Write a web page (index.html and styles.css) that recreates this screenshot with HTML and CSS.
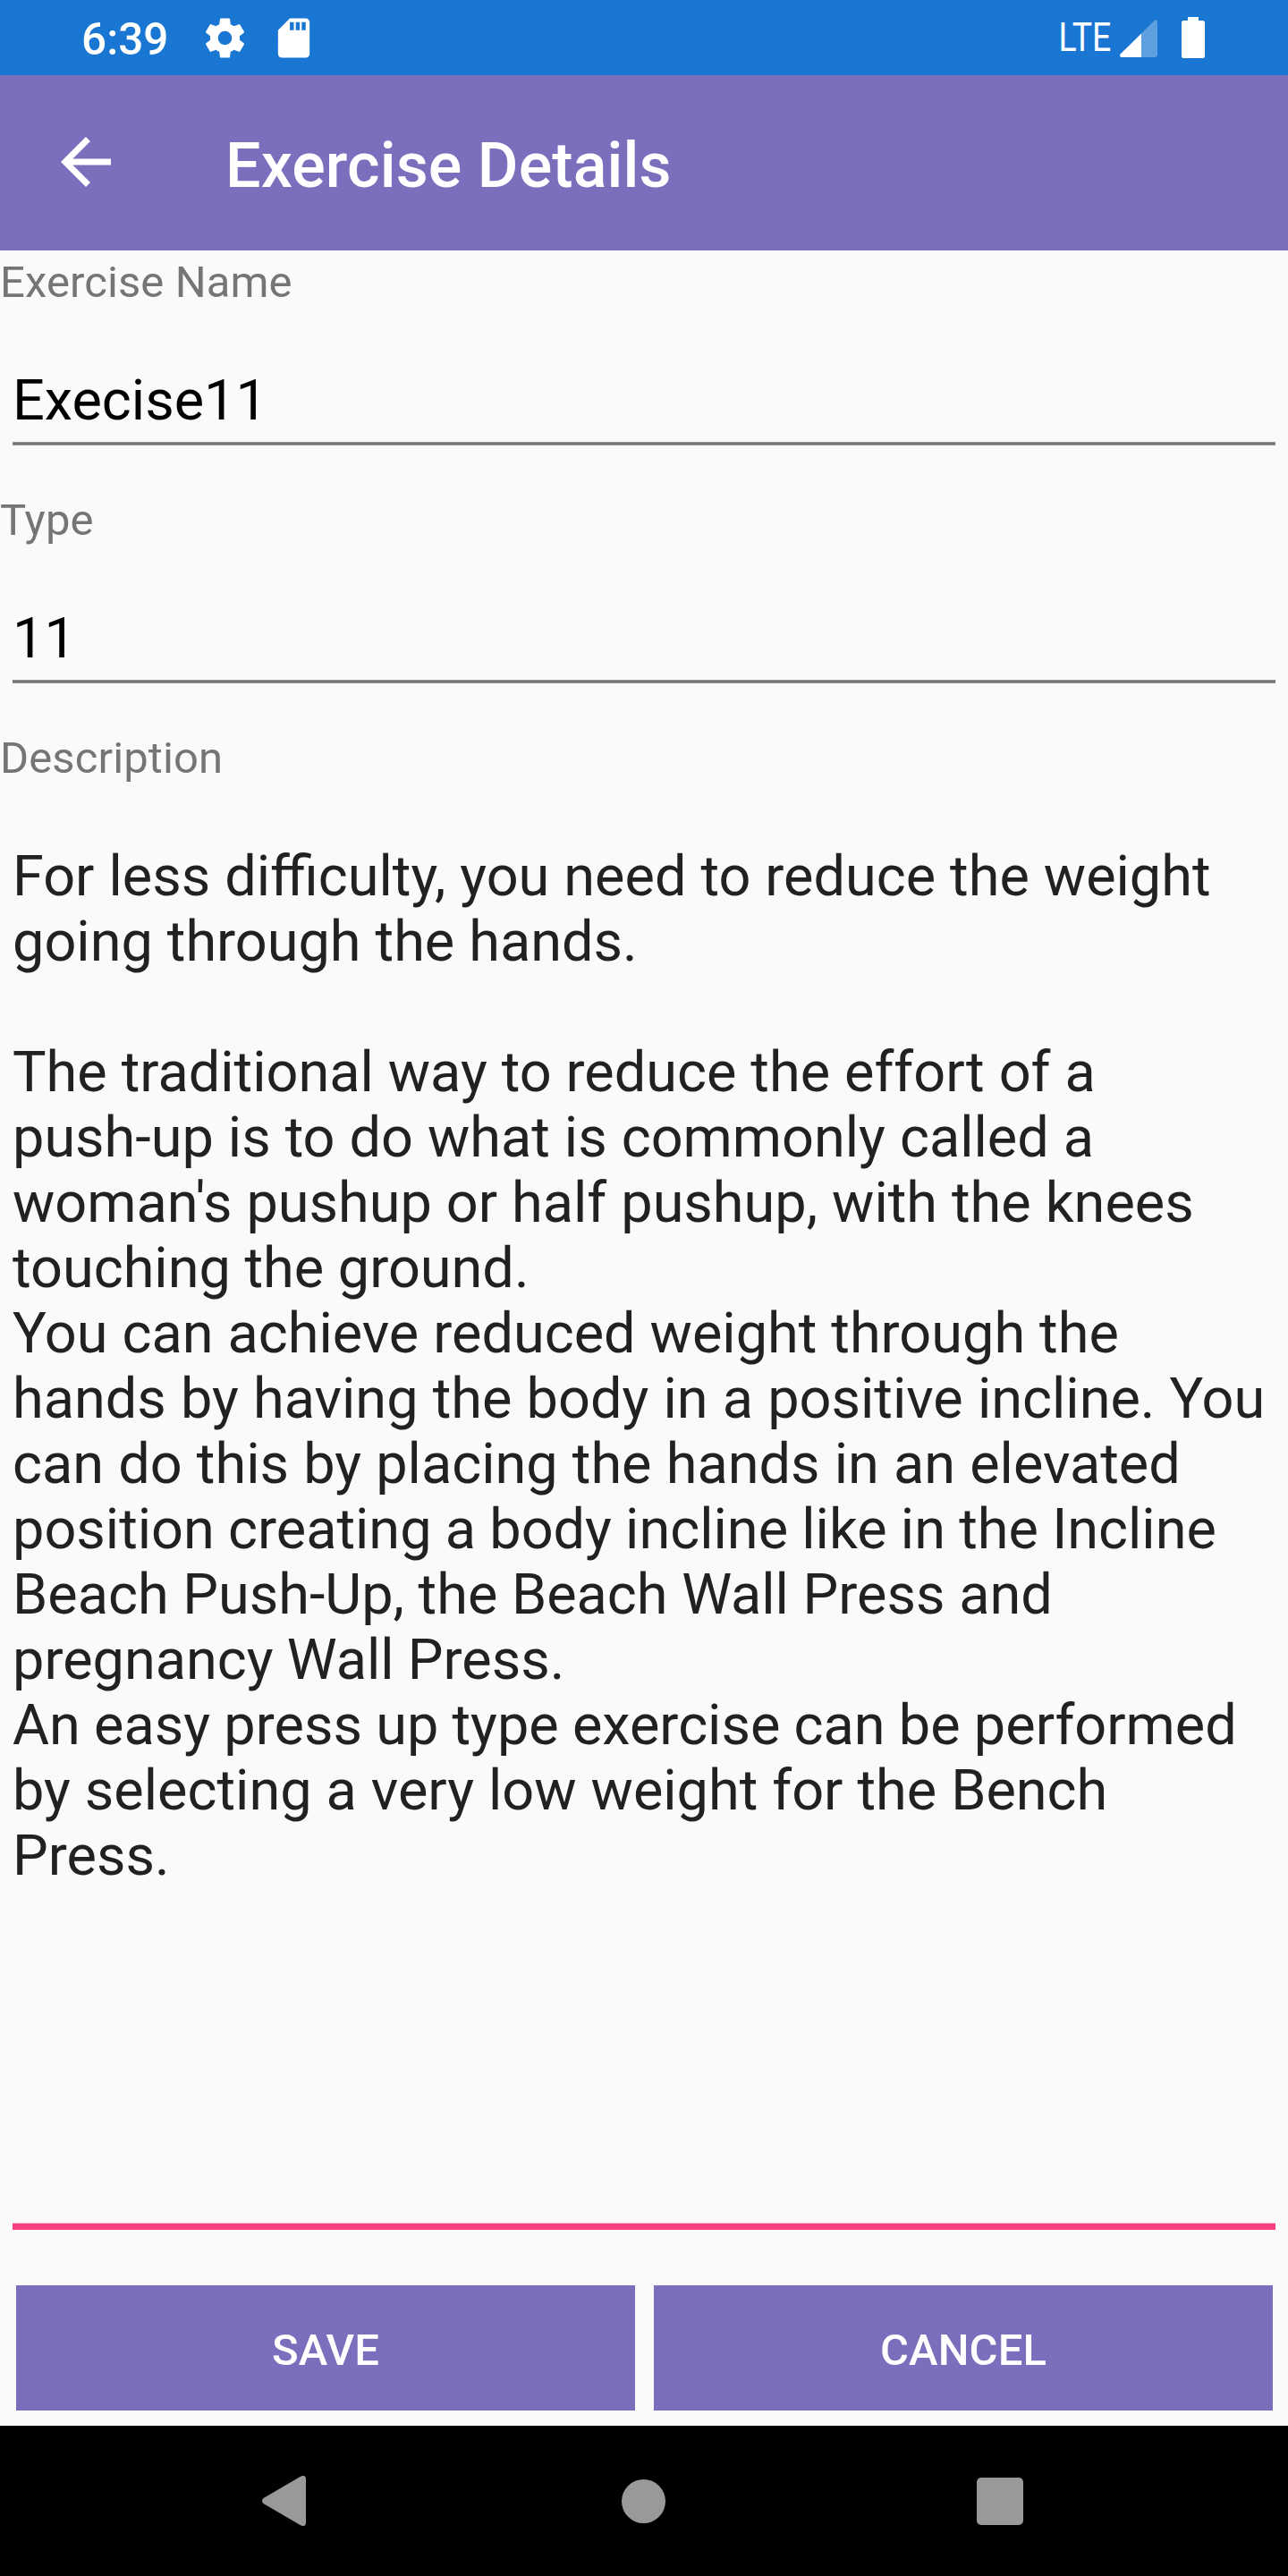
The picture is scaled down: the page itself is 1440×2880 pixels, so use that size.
FILE: index.html
```html
<!DOCTYPE html>
<html lang="en">
<head>
<meta charset="utf-8">
<title>Exercise Details</title>
<link rel="stylesheet" href="styles.css">
</head>
<body>
<header class="status">
  <span class="clock">6:39</span>
  <svg class="gear" width="53" height="53" viewBox="0 0 24 24"><path fill="#fff" d="M19.43 12.98c.04-.32.07-.64.07-.98s-.03-.66-.07-.98l2.11-1.65c.19-.15.24-.42.12-.64l-2-3.46c-.12-.22-.39-.3-.61-.22l-2.49 1c-.52-.4-1.08-.73-1.69-.98l-.38-2.65C14.46 2.18 14.25 2 14 2h-4c-.25 0-.46.18-.49.42l-.38 2.65c-.61.25-1.17.59-1.69.98l-2.49-1c-.23-.09-.49 0-.61.22l-2 3.46c-.13.22-.07.49.12.64l2.11 1.65c-.04.32-.07.65-.07.98s.03.66.07.98l-2.11 1.65c-.19.15-.24.42-.12.64l2 3.46c.12.22.39.3.61.22l2.49-1c.52.4 1.08.73 1.69.98l.38 2.65c.03.24.24.42.49.42h4c.25 0 .46-.18.49-.42l.38-2.65c.61-.25 1.17-.59 1.69-.98l2.49 1c.23.09.49 0 .61-.22l2-3.46c.12-.22.07-.49-.12-.64l-2.11-1.65zM12 15.5c-1.93 0-3.5-1.57-3.5-3.5s1.57-3.5 3.5-3.5 3.5 1.57 3.5 3.5-1.57 3.5-3.5 3.5z"/></svg>
  <svg class="sd" width="53" height="53" viewBox="0 0 24 24"><path fill="#fff" d="M18 2h-8L4.02 8 4 20c0 1.1.9 2 2 2h12c1.1 0 2-.9 2-2V4c0-1.1-.9-2-2-2zm-6 6h-2V4h2v4zm3 0h-2V4h2v4zm3 0h-2V4h2v4z"/></svg>
  <span class="lte">LTE</span>
  <svg class="signal" width="42" height="42" viewBox="0 0 42 42"><path fill="#fff" fill-opacity=".3" d="M24 15.5 38.5 1Q42-1 42 3v36q0 3-3 3H24z"/><path fill="#fff" d="M24 15.500V42H3q-4 0-2.500-3.500z"/></svg>
  <svg class="battery" width="26" height="46" viewBox="0 0 26 46"><path fill="#fff" d="M7 0h12v4h4.500q2.500 0 2.500 2.500v37q0 2.500-2.500 2.500h-21Q0 46 0 43.500v-37Q0 4 2.500 4H7z"/></svg>
</header>
<div class="appbar">
  <svg class="back" width="84" height="84" viewBox="0 0 24 24"><path fill="#fff" d="M20 11H7.83l5.59-5.59L12 4l-8 8 8 8 1.41-1.41L7.83 13H20v-2z"/></svg>
  <h1 class="title">Exercise Details</h1>
</div>
<main class="form">
  <div class="label">Exercise Name</div>
  <div class="field">Execise11</div>
  <div class="label">Type</div>
  <div class="field">11</div>
  <div class="label">Description</div>
  <div class="editor"><span class="loose">For less difficulty, you need to reduce the weight
going through the hands.

The traditional way to reduce the effort of a
push-up is to do what is commonly called a
woman's pushup or half pushup, with the knees</span>
touching the ground.
<span class="loose">You can achieve reduced weight through the</span>
<span class="looser">hands by having the body in a positive incline. You
can do this by placing the hands in an elevated</span>
<span class="tight">position creating a body incline like in the Incline</span>
Beach Push-Up, the Beach Wall Press and
<span class="tight">pregnancy Wall Press.
An easy press up type exercise can be performed</span>
<span class="loose">by selecting a very low weight for the Bench</span>
Press.</div>
  <div class="actions"><button class="btn">SAVE</button><button class="btn">CANCEL</button></div>
</main>
<nav class="navbar">
  <svg width="49" height="56" viewBox="0 0 49 56"><path fill="#999" d="M43 .7q6-2.500 6 3.300v48q0 5.800-6 3.300L1.500 31q-3-3 0-6z"/></svg>
  <svg class="home" width="49" height="49" viewBox="0 0 49 49"><circle cx="24.5" cy="24.5" r="24.5" fill="#999"/></svg>
  <svg width="52" height="53" viewBox="0 0 52 53"><rect width="52" height="53" rx="5" fill="#999"/></svg>
</nav>
</body>
</html>
```
FILE: styles.css
```css
* { box-sizing: border-box; }
body { margin: 0; width: 1440px; height: 2880px; display: flex; flex-direction: column; background: #fafafa; font-family: Roboto, sans-serif; }
svg { display: block; flex: none; }
.status { height: 84px; background: #1976d2; color: #fff; display: flex; align-items: center; padding: 0 93px 0 91px; }
.clock { font-size: 49.5px; font-weight: 500; width: 134px; padding-top: 4px; }
.sd { margin-left: 24px; }
.lte { margin-left: auto; font-size: 43.5px; transform: scaleX(.86); transform-origin: right; }
.signal { margin: 2px 0 0 10px; }
.battery { margin-left: 27px; }
.appbar { height: 196px; background: #7b6fbd; display: flex; align-items: center; padding-left: 54px; }
.back { margin-top: -3px; }
.title { margin: 6px 0 0 114px; color: #fff; font-size: 70px; font-weight: 500; line-height: 82px; letter-spacing: .1px; }
.form { height: 2432px; display: flex; flex-direction: column; }
.label { height: 70px; padding-top: 7px; font-size: 49px; line-height: 57px; letter-spacing: .1px; color: #757575; }
.field { height: 148px; margin: 0 14px 48px; padding-top: 61px; background: linear-gradient(#929292 1px, #757575 1px 3px, #929292 3px) bottom / 100% 4px no-repeat; font-size: 63px; line-height: 73px; color: #000; }
.editor { height: 1611px; margin: 0 14px; padding-top: 61px; border-bottom: 7px solid #ff4081; box-shadow: inset 0 -1px #fcb4cb; font-size: 63px; line-height: 73px; color: #212121; white-space: pre; }
.loose { word-spacing: .35px; }
.looser { word-spacing: .55px; }
.tight { word-spacing: -.4px; }
.actions { display: grid; grid-template-columns: 1fr 1fr; gap: 21px; margin: 62px 17px 0 18px; }
.btn { height: 140px; padding: 4px 0 0; border: 0; background: #7b6fbd; color: #fff; font: 500 49px Roboto, sans-serif; letter-spacing: .1px; }
.navbar { height: 168px; background: #000; display: flex; align-items: center; justify-content: space-between; padding: 0 296px 0 293px; }
.home { margin-left: 5px; }
```
